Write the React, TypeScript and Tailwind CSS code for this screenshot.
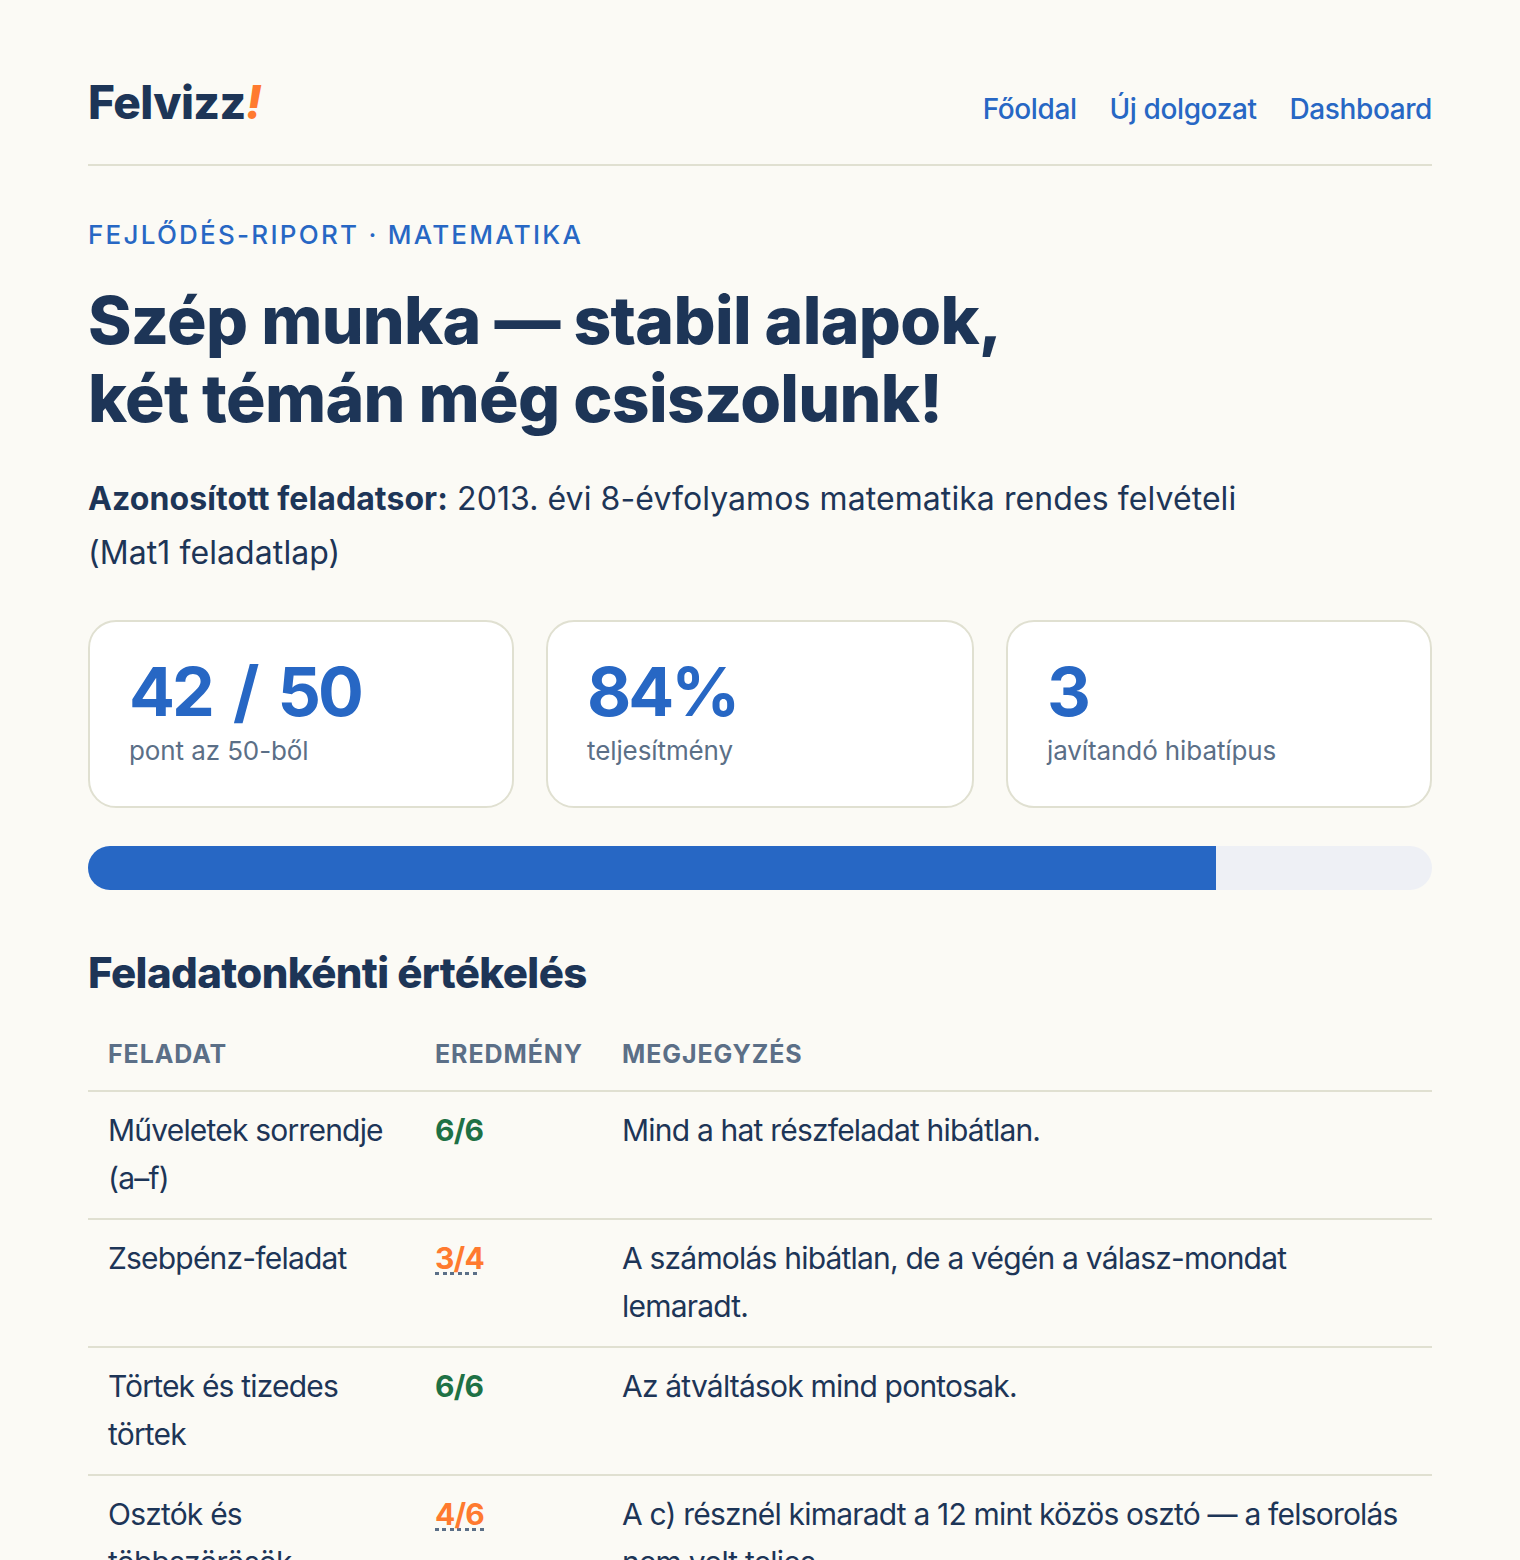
const rows = [
  { task: 'Műveletek sorrendje (a–f)', score: '6/6', ok: true, dash: '', note: 'Mind a hat részfeladat hibátlan.' },
  { task: 'Zsebpénz-feladat', score: '3/4', ok: false, dash: 'bg-[length:44px_3px]', note: 'A számolás hibátlan, de a végén a válasz-mondat lemaradt.' },
  { task: 'Törtek és tizedes törtek', score: '6/6', ok: true, dash: '', note: 'Az átváltások mind pontosak.' },
  { task: 'Osztók és többszörösök', score: '4/6', ok: false, dash: 'bg-[length:50px_3px]', note: 'A c) résznél kimaradt a 12 mint közös osztó — a felsorolás nem volt teljes.' },
];

const stats = [
  { value: '42 / 50', label: 'pont az 50-ből', width: 'w-[426px]' },
  { value: '84%', label: 'teljesítmény', width: 'w-[428px]' },
  { value: '3', label: 'javítandó hibatípus', width: 'w-[426px]' },
];

export default function App() {
  return (
    <div className="h-[1560px] overflow-hidden bg-[#fbfaf5] px-[88px] pt-[64px] font-['Inter',sans-serif] text-[#1d3557]">
      <header className="flex h-[102px] items-start justify-between border-b-2 border-[#e0e0d1]">
        <div className="mt-[8px] text-[46px] leading-[60px] font-extrabold tracking-[-0.6px]">
          Felvizz<span className="text-[#ff7a2f] italic">!</span>
        </div>
        <nav className="mt-[27px] flex gap-[33px] text-[28px] leading-[36px] font-medium tracking-[-0.4px] text-[#2767c4]">
          <a>Főoldal</a>
          <a>Új dolgozat</a>
          <a>Dashboard</a>
        </nav>
      </header>

      <p className="mt-[52px] text-[26px] leading-[34px] font-medium tracking-[2.25px] text-[#2767c4]">
        FEJLŐDÉS-RIPORT · MATEMATIKA
      </p>
      <h1 className="mt-[29px] text-[66px] leading-[78px] font-extrabold tracking-[-0.7px]">
        Szép munka — stabil alapok,
        <br />
        két témán még csiszolunk!
      </h1>
      <p className="mt-[35px] w-[1190px] text-[32px] leading-[54px] tracking-[0.08px]">
        <strong className="font-bold">Azonosított feladatsor:</strong> 2013. évi 8-évfolyamos matematika rendes felvételi (Mat1 feladatlap)
      </p>

      <div className="mt-[40px] flex justify-between">
        {stats.map((s) => (
          <div key={s.label} className={`h-[188px] ${s.width} rounded-[28px] border-2 border-[#e0e0d1] bg-white px-[39px] pt-[30px]`}>
            <div className="text-[68px] leading-[78px] font-bold tracking-[-3px] [word-spacing:8px] text-[#2767c4]">{s.value}</div>
            <div className="mt-[3px] text-[26px] leading-[36px] tracking-[-0.1px] text-[#5b6f87]">{s.label}</div>
          </div>
        ))}
      </div>

      <div className="mt-[38px] h-[44px] overflow-hidden rounded-[22px] bg-[#eef0f5]">
        <div className="h-full w-[1128px] bg-[#2767c4]" />
      </div>

      <h2 className="mt-[55px] text-[42px] leading-[56px] font-extrabold tracking-[-0.6px]">Feladatonkénti értékelés</h2>

      <table className="mt-[22px] w-full table-fixed border-collapse text-left text-[30px] leading-[48px] tracking-[-0.8px]">
        <colgroup>
          <col className="w-[347px]" />
          <col className="w-[187px]" />
          <col />
        </colgroup>
        <thead>
          <tr className="border-b-2 border-[#e0e0d1] text-[25px] leading-[34px] font-bold tracking-[0.9px] text-[#5b6f87]">
            <th className="px-[20px] pt-[14px] pb-[19px] font-bold">FELADAT</th>
            <th className="pt-[14px] pb-[19px] font-bold">EREDMÉNY</th>
            <th className="pt-[14px] pb-[19px] font-bold">MEGJEGYZÉS</th>
          </tr>
        </thead>
        <tbody>
          {rows.map((r) => (
            <tr key={r.task} className="border-b-2 border-[#e0e0d1] align-top">
              <td className="px-[20px] pt-[14px] pb-[16px]">{r.task}</td>
              <td className="pt-[14px] pb-[16px]">
                {r.ok ? (
                  <span className="font-bold text-[#1e7145]">{r.score}</span>
                ) : (
                  <span className={`inline-block bg-[repeating-linear-gradient(90deg,#5b6f87_0,#5b6f87_4px,transparent_4px,transparent_7.5px)] bg-bottom-left bg-no-repeat ${r.dash} leading-[34px] font-bold text-[#ff7a2f]`}>
                    {r.score}
                  </span>
                )}
              </td>
              <td className="pt-[14px] pr-[20px] pb-[16px]">{r.note}</td>
            </tr>
          ))}
        </tbody>
      </table>
    </div>
  );
}
